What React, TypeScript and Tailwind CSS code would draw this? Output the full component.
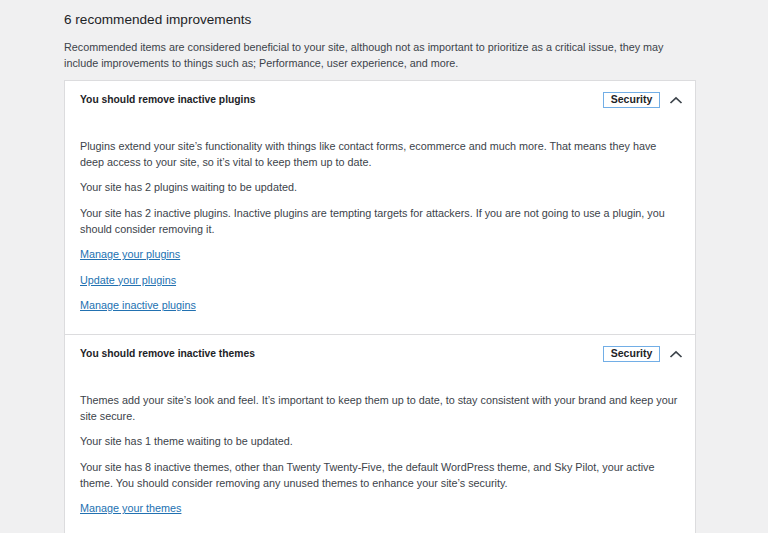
import React from "react";

function Chevron() {
  return (
    <svg width="14" height="8" viewBox="0 0 14 8" className="block">
      <path d="M1.5 7 L7 1.8 L12.5 7" fill="none" stroke="#3c434a" strokeWidth="1.7" />
    </svg>
  );
}

function Item({ title, children, last }: { title: string; children: React.ReactNode; last?: boolean }) {
  return (
    <div className={last ? "" : "border-b border-[#dcdcde]"}>
      <div className="flex items-center h-[38px] pl-[15px] pr-[12px]">
        <div className="flex-1 text-[10.3px] font-bold text-[#1d2327]">{title}</div>
        <span className="border border-[#72aee6] text-[10.5px] font-bold text-[#1d2327] w-[57px] h-[16px] flex items-center justify-center">
          Security
        </span>
        <span className="ml-[9px] w-[14px] flex justify-center">
          <Chevron />
        </span>
      </div>
      <div className="px-[15px] pt-[19px] pb-[21px] text-[10.8px] leading-[16px] text-[#3c434a] flex flex-col gap-[9.4px]">
        {children}
      </div>
    </div>
  );
}

function A({ children }: { children: React.ReactNode }) {
  return (
    <p>
      <a href="#" className="text-[#2271b1] underline">{children}</a>
    </p>
  );
}

export default function App() {
  return (
    <div className="min-h-[533px] bg-[#f0f0f1] font-['Liberation_Sans',Arial,sans-serif] text-[#3c434a]">
      <div className="w-[632px] ml-[64px] pt-[10px]">
        <h2 className="text-[13.6px] leading-[20px] text-[#1d2327] font-normal">6 recommended improvements</h2>
        <p className="mt-[9px] text-[10.8px] leading-[16px]">
          Recommended items are considered beneficial to your site, although not as important to prioritize as a critical issue, they may include improvements to things such as; Performance, user experience, and more.
        </p>
        <div className="mt-[9px] bg-white border border-[#dcdcde]">
          <Item title="You should remove inactive plugins">
            <p>Plugins extend your site’s functionality with things like contact forms, ecommerce and much more. That means they have deep access to your site, so it’s vital to keep them up to date.</p>
            <p>Your site has 2 plugins waiting to be updated.</p>
            <p>Your site has 2 inactive plugins. Inactive plugins are tempting targets for attackers. If you are not going to use a plugin, you should consider removing it.</p>
            <A>Manage your plugins</A>
            <A>Update your plugins</A>
            <A>Manage inactive plugins</A>
          </Item>
          <Item title="You should remove inactive themes" last>
            <p>Themes add your site’s look and feel. It’s important to keep them up to date, to stay consistent with your brand and keep your site secure.</p>
            <p>Your site has 1 theme waiting to be updated.</p>
            <p>Your site has 8 inactive themes, other than Twenty Twenty-Five, the default WordPress theme, and Sky Pilot, your active theme. You should consider removing any unused themes to enhance your site’s security.</p>
            <A>Manage your themes</A>
          </Item>
        </div>
      </div>
    </div>
  );
}
